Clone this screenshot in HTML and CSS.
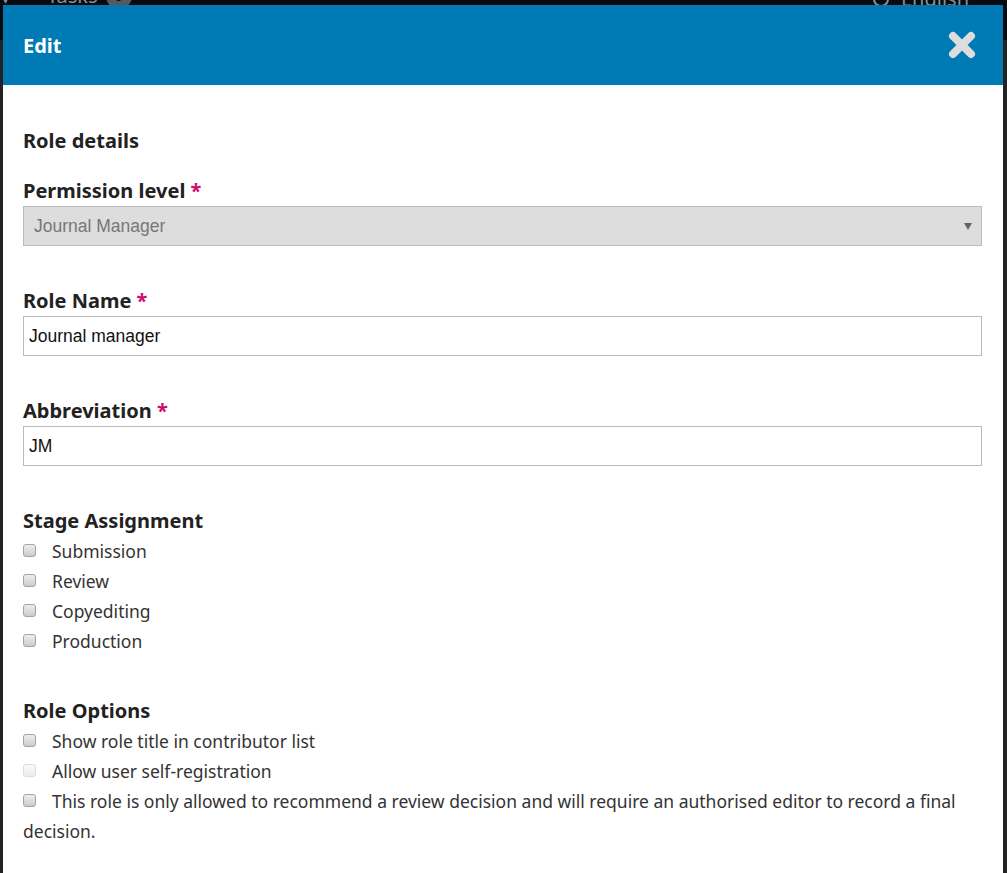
FILE: index.html
```html
<!DOCTYPE html>
<html lang="en">
<head>
<meta charset="utf-8">
<title>Edit</title>
<link rel="stylesheet" href="styles.css">
</head>
<body>
<div class="app-bar">
  <span class="caret">&#9662;</span>
  <span class="tasks">Tasks <span class="badge">0</span></span>
  <span class="spacer"></span>
  <span class="lang"><span class="globe"></span>English</span>
</div>

<div class="modal">
  <div class="modal-header">
    <h2 class="modal-title">Edit</h2>
    <button class="close" type="button" aria-label="Close">
      <svg width="28" height="28" viewBox="0 0 28 28">
        <path d="M5 5 L23 23 M23 5 L5 23" stroke="#dddddd" stroke-width="8" stroke-linecap="round" fill="none"/>
      </svg>
    </button>
  </div>

  <div class="modal-body">
    <h3 class="section-title">Role details</h3>

    <div class="field">
      <div class="label">Permission level <span class="req">*</span></div>
      <div class="select">Journal Manager<span class="arrow"></span></div>
    </div>

    <div class="field">
      <div class="label">Role Name <span class="req">*</span></div>
      <div class="input">Journal manager</div>
    </div>

    <div class="field">
      <div class="label">Abbreviation <span class="req">*</span></div>
      <div class="input">JM</div>
    </div>

    <div class="field">
      <div class="label">Stage Assignment</div>
      <div class="check-row"><span class="box"></span>Submission</div>
      <div class="check-row"><span class="box"></span>Review</div>
      <div class="check-row"><span class="box"></span>Copyediting</div>
      <div class="check-row"><span class="box"></span>Production</div>
    </div>

    <div class="field">
      <div class="label">Role Options</div>
      <div class="check-row"><span class="box"></span>Show role title in contributor list</div>
      <div class="check-row"><span class="box disabled"></span>Allow user self-registration</div>
      <div class="check-row"><span class="box"></span>This role is only allowed to recommend a review decision and will require an authorised editor to record a final decision.</div>
    </div>
  </div>
</div>
</body>
</html>
```

FILE: styles.css
```css
* { box-sizing: border-box; }

html, body {
  margin: 0;
  padding: 0;
  height: 100%;
}

body {
  background: #222222;
  font-family: "Noto Sans", "Open Sans", sans-serif;
  color: #222222;
  position: relative;
  overflow: hidden;
}

.app-bar {
  height: 40px;
  background: #070b10;
  display: flex;
  align-items: flex-end;
  padding: 0 8px 31px 2px;
  font-size: 20px;
  line-height: 20px;
  color: #8a8f94;
  gap: 38px;
}

.caret { font-size: 14px; }

.tasks {
  display: flex;
  align-items: center;
  gap: 8px;
}

.badge {
  display: inline-block;
  width: 26px;
  height: 26px;
  border-radius: 13px;
  background: #555a60;
  color: #070b10;
  font-size: 14px;
  text-align: center;
  line-height: 26px;
}

.spacer { flex: 1; }

.lang {
  display: flex;
  align-items: center;
  gap: 12px;
  margin-right: 30px;
}

.globe {
  width: 16px;
  height: 16px;
  border: 2px solid #8a8f94;
  border-radius: 50%;
}

.modal {
  position: absolute;
  left: 3px;
  right: 4px;
  top: 5px;
  bottom: 0;
  background: #ffffff;
}

.modal-header {
  height: 80px;
  background: #007ab5;
  display: flex;
  align-items: center;
  justify-content: space-between;
  padding: 0 27px 0 20px;
}

.modal-title {
  margin: 0;
  color: #ffffff;
  font-size: 20px;
  font-weight: 700;
}

.close {
  border: 0;
  background: none;
  padding: 0;
  width: 28px;
  height: 28px;
  display: block;
  cursor: pointer;
}

.close svg { display: block; }

.modal-body {
  padding: 41px 21px 0 20px;
}

.section-title {
  margin: 0 0 20px;
  font-size: 20px;
  line-height: 30px;
  font-weight: 700;
}

.field {
  margin-bottom: 40px;
}

.label {
  font-size: 20px;
  line-height: 30px;
  font-weight: 700;
}

.req { color: #d00a6c; }

.select,
.input {
  height: 40px;
  border: 1px solid #bbbbbb;
  font-family: "Liberation Sans", Arial, sans-serif;
  font-size: 17.5px;
  display: flex;
  align-items: center;
}

.select {
  background: #dddddd;
  color: #777777;
  padding: 0 9px 0 10px;
  justify-content: space-between;
}

.arrow {
  width: 0;
  height: 0;
  border-left: 4px solid transparent;
  border-right: 4px solid transparent;
  border-top: 7px solid #666666;
  margin-top: 1px;
}

.input {
  background: #ffffff;
  color: #111111;
  padding: 0 5px;
}

.check-row {
  font-size: 17.5px;
  line-height: 30px;
  color: #333333;
}

.box {
  display: inline-block;
  width: 13px;
  height: 13px;
  border: 1px solid #a3a3a3;
  border-radius: 3px;
  background: linear-gradient(#eeeeee, #cccccc);
  margin-right: 16px;
  vertical-align: 1px;
}

.box.disabled {
  border-color: #dddddd;
  background: linear-gradient(#fafafa, #ececec);
}
```
